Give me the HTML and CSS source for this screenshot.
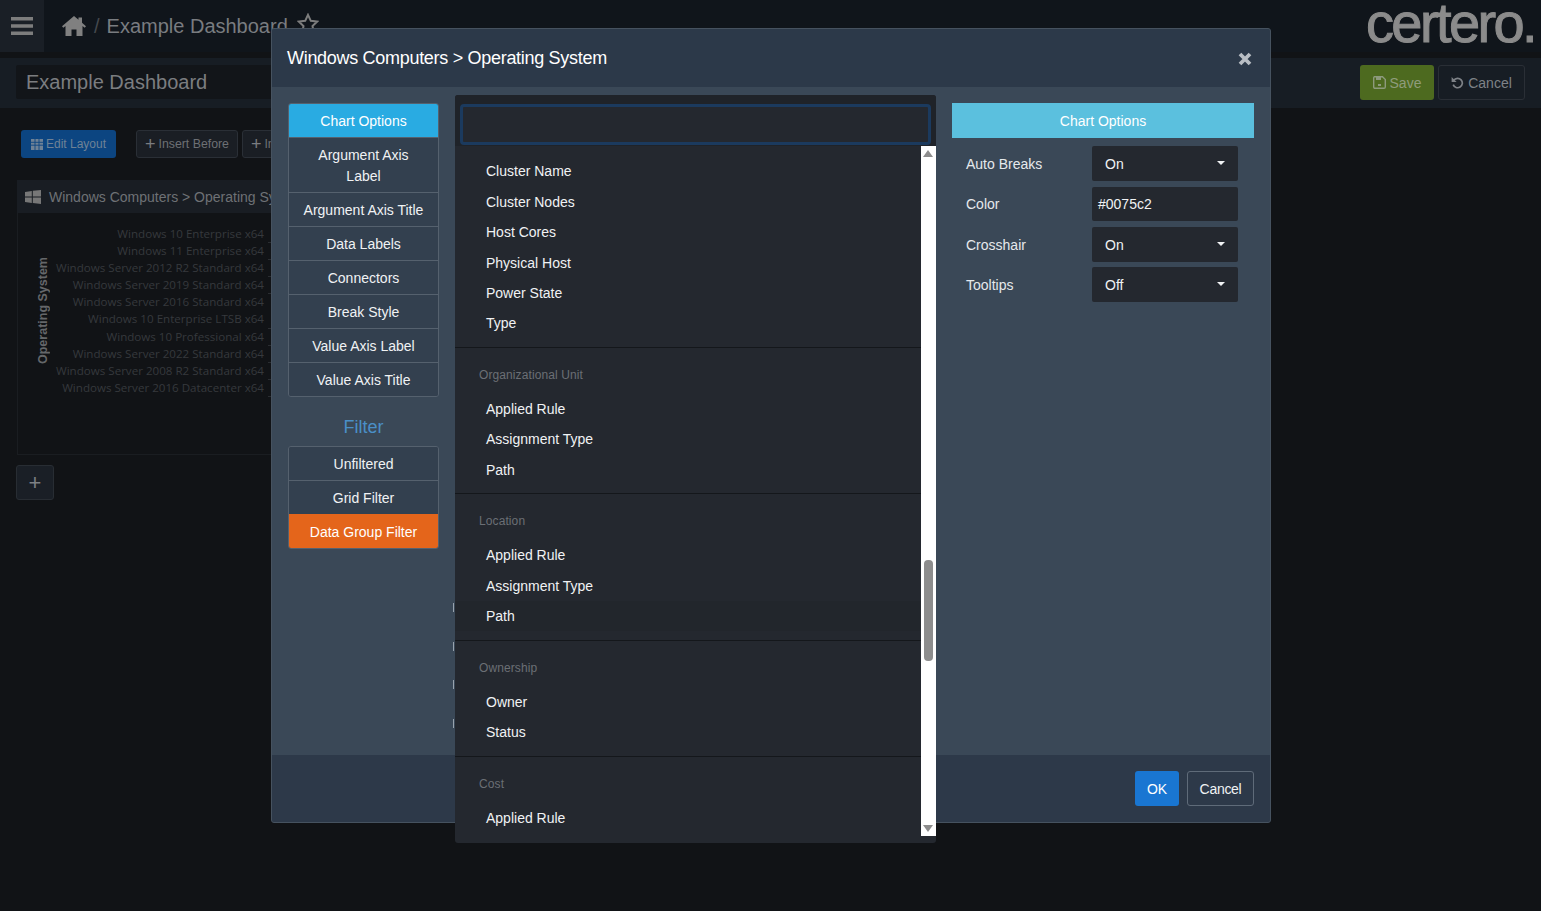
FILE: index.html
```html
<!DOCTYPE html>
<html lang="en">
<head>
<meta charset="utf-8">
<title>Example Dashboard</title>
<link rel="stylesheet" href="styles.css">
</head>
<body>
<div class="page">
  <header class="topbar">
    <button class="menu-btn" aria-label="Menu">
      <svg width="22" height="18" viewBox="0 0 22 18"><path d="M0 0h22v3.4H0zM0 7.3h22v3.4H0zM0 14.6h22V18H0z" fill="#7d7d7d"/></svg>
    </button>
    <div class="crumbs">
      <svg class="home" width="24" height="20" viewBox="0 0 24 20"><path d="M12 0 0 10.2l1.3 1.5L3.5 10v10h6v-6.5h5V20h6V10l2.2 1.7 1.3-1.5L20 6.8V1.5h-3.5v2.3z" fill="#808080"/></svg>
      <span class="sep">/</span>
      <span class="crumb-title">Example Dashboard</span>
      <svg class="star" width="22" height="21" viewBox="0 0 22 21"><path d="m11 1.8 2.8 6 6.4.8-4.7 4.4 1.2 6.4L11 16.2l-5.700 3.200 1.200-6.400L1.800 8.600l6.400-.8z" fill="none" stroke="#7d7d7d" stroke-width="2"/></svg>
    </div>
    <div class="logo">certero.</div>
  </header>

  <div class="subbar">
    <div class="name-input">Example Dashboard</div>
    <div class="sub-actions">
      <button class="btn-save">
        <svg width="13" height="13" viewBox="0 0 13 13"><path d="M1.500.7h8l2.800 2.800v7.500a1.300 1.300 0 0 1-1.300 1.300H1.500A1.300 1.300 0 0 1 .7 11V2a1.300 1.300 0 0 1 .8-1.300z" fill="none" stroke="#8d9a7c" stroke-width="1.400"/><path d="M3 1h5v3H3zM5 8h3v2H5z" fill="#8d9a7c"/></svg>
        Save
      </button>
      <button class="btn-cancel-top">
        <svg width="13" height="13" viewBox="0 0 13 13"><path d="M2.800 4.300a4.700 4.700 0 1 1-.6 4.300" fill="none" stroke="#7e8287" stroke-width="1.700"/><path d="M.6 1v5h5z" fill="#7e8287"/></svg>
        Cancel
      </button>
    </div>
  </div>

  <main class="content">
    <div class="toolbar">
      <button class="btn-layout">
        <svg width="12" height="11" viewBox="0 0 12 11"><path d="M0 0h12v11H0z" fill="#6f8296"/><path d="M0 3.300h12M0 6.200h12M4 0v11M8 0v11" stroke="#0c4581" stroke-width=".9"/></svg>
        Edit Layout
      </button>
      <button class="btn-tool"><span class="plus">+</span>Insert Before</button>
      <button class="btn-tool"><span class="plus">+</span>Insert After</button>
    </div>
    <section class="widget">
      <div class="widget-head">
        <svg width="16" height="14" viewBox="0 0 16 14"><path d="M0 2 6.800.9v5.500H0zM7.800.8 16 0v6.400H7.800zM0 7.400h6.800v5.500L0 12zM7.800 7.400H16V14l-8.200-1.100z" fill="#777"/></svg>
        <span>Windows Computers &gt; Operating System</span>
      </div>
      <div class="widget-body">
        <div class="axis-title">Operating System</div>
        <ul class="axis-labels">
          <li>Windows 10 Enterprise x64</li>
          <li>Windows 11 Enterprise x64</li>
          <li>Windows Server 2012 R2 Standard x64</li>
          <li>Windows Server 2019 Standard x64</li>
          <li>Windows Server 2016 Standard x64</li>
          <li>Windows 10 Enterprise LTSB x64</li>
          <li>Windows 10 Professional x64</li>
          <li>Windows Server 2022 Standard x64</li>
          <li>Windows Server 2008 R2 Standard x64</li>
          <li>Windows Server 2016 Datacenter x64</li>
        </ul>
        <div class="axis-ticks"></div>
      </div>
    </section>
    <button class="btn-add">+</button>
  </main>

  <div class="modal">
    <div class="modal-head">
      <h2>Windows Computers &gt; Operating System</h2>
      <svg class="close" width="14" height="14" viewBox="0 0 14 14"><path d="M2 2l10 10M12 2 2 12" stroke="#b9bec4" stroke-width="3.800"/></svg>
    </div>
    <div class="modal-body">
      <nav class="side">
        <div class="list">
          <div class="list-item active">Chart Options</div>
          <div class="list-item">Argument Axis Label</div>
          <div class="list-item wide">Argument Axis Title</div>
          <div class="list-item">Data Labels</div>
          <div class="list-item">Connectors</div>
          <div class="list-item">Break Style</div>
          <div class="list-item wide">Value Axis Label</div>
          <div class="list-item">Value Axis Title</div>
        </div>
        <div class="filter-title">Filter</div>
        <div class="list">
          <div class="list-item">Unfiltered</div>
          <div class="list-item">Grid Filter</div>
          <div class="list-item orange">Data Group Filter</div>
        </div>
      </nav>
      <div class="middle">
        <span class="peek"></span>
        <span class="peek"></span>
        <span class="peek"></span>
        <span class="peek"></span>
      </div>
      <aside class="options">
        <div class="options-title">Chart Options</div>
        <div class="opt-row"><label>Auto Breaks</label><div class="select">On</div></div>
        <div class="opt-row"><label>Color</label><div class="text-input">#0075c2</div></div>
        <div class="opt-row"><label>Crosshair</label><div class="select">On</div></div>
        <div class="opt-row"><label>Tooltips</label><div class="select">Off</div></div>
      </aside>
    </div>
    <div class="modal-foot">
      <button class="btn-ok">OK</button>
      <button class="btn-cancel">Cancel</button>
    </div>
  </div>

  <div class="dropdown">
    <div class="search-wrap"><div class="search"></div></div>
    <div class="drop-main">
      <div class="drop-list">
        <div class="group first">
          <div class="opt">Cluster Name</div>
          <div class="opt">Cluster Nodes</div>
          <div class="opt">Host Cores</div>
          <div class="opt">Physical Host</div>
          <div class="opt">Power State</div>
          <div class="opt">Type</div>
        </div>
        <div class="group">
          <div class="group-title">Organizational Unit</div>
          <div class="opt">Applied Rule</div>
          <div class="opt">Assignment Type</div>
          <div class="opt">Path</div>
        </div>
        <div class="group">
          <div class="group-title">Location</div>
          <div class="opt">Applied Rule</div>
          <div class="opt">Assignment Type</div>
          <div class="opt hover">Path</div>
        </div>
        <div class="group">
          <div class="group-title">Ownership</div>
          <div class="opt">Owner</div>
          <div class="opt">Status</div>
        </div>
        <div class="group">
          <div class="group-title">Cost</div>
          <div class="opt">Applied Rule</div>
        </div>
      </div>
      <div class="scrollbar">
        <span class="arrow up"></span>
        <div class="track"><div class="thumb"></div></div>
        <span class="arrow down"></span>
      </div>
    </div>
  </div>
</div>
</body>
</html>
```

FILE: styles.css
```css
* { box-sizing: border-box; }
html, body { margin: 0; height: 100%; }
body { background: #111316; font-family: "Liberation Sans", Arial, sans-serif; overflow: hidden; }
button { font-family: inherit; cursor: pointer; }
ul { list-style: none; margin: 0; padding: 0; }

.page { position: relative; width: 1541px; height: 911px; overflow: hidden; }

.topbar { height: 52px; background: #10151b; display: flex; align-items: center; }
.menu-btn { width: 44px; height: 52px; background: #1a1f26; border: 0; padding: 0; display: flex; align-items: center; justify-content: center; }
.crumbs { display: flex; align-items: center; margin-left: 18px; }
.sep { color: #44484d; font-size: 20px; margin: 0 7px 0 8px; }
.crumb-title { color: #797c80; font-size: 20px; }
.star { margin-left: 9px; margin-top: -5px; }
.logo { margin-left: auto; margin-right: 6px; align-self: flex-start; color: #8b8b8b; font-size: 56px; font-weight: 400; letter-spacing: -2.600px; line-height: 46px; -webkit-text-stroke: 1px #8b8b8b; }

.subbar { height: 50px; margin-top: 6px; background: #171d24; display: flex; align-items: flex-start; justify-content: space-between; padding: 7px 16px 0; }
.name-input { width: 560px; height: 34px; background: #121519; color: #7b7d80; font-size: 20px; line-height: 34px; padding-left: 10px; border-radius: 2px; }
.sub-actions { display: flex; gap: 4px; }
.btn-save { width: 74px; height: 35px; background: #4d6a1f; border: 0; border-radius: 3px; color: #8f9c7b; font-size: 14px; display: flex; align-items: center; justify-content: center; gap: 4px; }
.btn-cancel-top { width: 87px; height: 35px; background: transparent; border: 1px solid #2a2f36; border-radius: 3px; color: #7e8287; font-size: 14px; display: flex; align-items: center; justify-content: center; gap: 4px; }

.content { padding: 22px 16px 0; }
.toolbar { display: flex; margin-left: 5px; }
.btn-layout { width: 95px; height: 28px; background: #0c4581; border: 0; border-radius: 3px; color: #6f8296; font-size: 12px; display: flex; align-items: center; justify-content: center; gap: 3px; padding: 0; margin-right: 20px; }
.btn-tool { height: 28px; background: #1a1e24; border: 1px solid #2a2f36; border-radius: 3px; color: #6d7074; font-size: 12.300px; display: flex; align-items: center; padding: 0 8px; margin-right: 4px; white-space: nowrap; }
.plus { font-size: 18px; line-height: 18px; margin-right: 3px; color: #7a7c80; }

.widget { margin-top: 22px; width: 560px; margin-left: 1px; }
.widget-head { height: 33px; background: #191d23; display: flex; align-items: center; gap: 8px; padding-left: 8px; color: #6e7175; font-size: 14px; }
.widget-body { height: 242px; border: 1px solid #1a1d21; border-top: 0; display: flex; padding: 12px 0 0 0; }
.axis-title { flex: none; writing-mode: vertical-rl; transform: rotate(180deg); color: #65676a; font-size: 12.500px; font-weight: 700; height: 108px; width: 14px; margin: 32px 0 0 18px; text-align: center; white-space: nowrap; }
.axis-labels { flex: none; width: 214px; text-align: right; font-family: "Open Sans", sans-serif; font-size: 11.600px; line-height: 17.100px; color: #36393d; }
.axis-labels li { white-space: nowrap; }
.axis-ticks { flex: none; width: 4px; height: 171px; margin: 1px 0 0 4px; background: repeating-linear-gradient(to bottom, transparent 0, transparent 16.100px, #2a2d31 16.100px, #2a2d31 17.100px); }

.btn-add { display: block; margin-top: 10px; width: 38px; height: 35px; background: #1a1f26; border: 1px solid #282d33; border-radius: 3px; color: #7d8084; font-size: 22px; line-height: 30px; padding: 0; }

/* Modal overlays the page */
.modal { position: absolute; left: 271px; top: 28px; width: 1000px; height: 795px; border: 1px solid #46525f; border-radius: 3px; background: #3a4857; display: flex; flex-direction: column; overflow: hidden; }
.modal-head { height: 58px; flex: none; background: #2c3949; display: flex; align-items: center; justify-content: space-between; padding: 1px 18px 0 15px; }
.modal-head h2 { margin: 0; color: #fff; font-size: 18px; font-weight: 400; letter-spacing: -.3px; }
.modal-body { flex: 1; display: flex; padding: 16px 16px 0; min-height: 0; }
.modal-foot { height: 67px; flex: none; background: #2d3949; display: flex; align-items: center; justify-content: flex-end; gap: 8px; padding: 0 16px; }

.side { width: 151px; flex: none; }
.list { border: 1px solid #55616e; border-radius: 3px; overflow: hidden; }
.list-item { color: #f0f2f4; font-size: 14px; text-align: center; line-height: 21px; padding: 7px 24px 5px; background: #33404f; border-top: 1px solid #55616e; }
.list > .list-item:first-child { border-top: 0; }
.list-item.wide { padding-left: 6px; padding-right: 6px; }
.list-item.active { background: #29abe2; color: #fff; margin: -1px -1px 0; height: 34px; padding-top: 8px; padding-bottom: 5px; }
.list-item.orange { background: #e4651b; color: #fff; margin: 0 -1px -1px; height: 35px; padding: 8px 6px 6px; border-top: 0; }
.filter-title { color: #4a8fc7; font-size: 18px; text-align: center; line-height: 22px; margin: 19px 0 8px; }

.middle { flex: 1; display: flex; flex-direction: column; gap: 29.500px; padding: 500px 0 0 14px; }
.peek { width: 1px; height: 9px; background: #98a3ae; }

.options { width: 302px; flex: none; }
.options-title { height: 35px; background: #5bc0de; color: #fff; font-size: 14px; text-align: center; line-height: 36px; }
.opt-row { display: flex; align-items: center; justify-content: space-between; padding: 0 16px 0 14px; margin-top: 6px; }
.opt-row:nth-child(2) { margin-top: 8px; }
.opt-row:nth-child(5) { margin-top: 5px; }
.opt-row label { color: #e6e9ec; font-size: 14px; }
.select, .text-input { position: relative; width: 146px; height: 35px; background: #24282f; border-radius: 2px; color: #f0f2f4; font-size: 14px; line-height: 36px; padding-left: 13px; }
.text-input { height: 34px; line-height: 35px; padding-left: 6px; }
.select::after { content: ""; position: absolute; right: 13px; top: 15px; border: 4px solid transparent; border-top-color: #f0f2f4; border-bottom: 0; }

.btn-ok { width: 44px; height: 35px; background: #1976d2; border: 0; border-radius: 3px; color: #fff; font-size: 14px; padding: 0; }
.btn-cancel { width: 67px; height: 35px; background: transparent; border: 1px solid #5f6b79; border-radius: 3px; color: #f0f2f4; font-size: 14px; letter-spacing: -.3px; padding: 0; }

/* Dropdown lies over the modal */
.dropdown { position: absolute; left: 455px; top: 95px; width: 481px; height: 748px; background: #24282f; border-radius: 3px; display: flex; flex-direction: column; overflow: hidden; }
.search-wrap { height: 51px; flex: none; padding: 9px 5px 0 5px; background: #1f2329; }
.search { height: 41px; background: #24282f; border: 3px solid #1b3a5e; border-radius: 4px; }
.drop-main { flex: 1; display: flex; min-height: 0; padding-bottom: 7px; }
.drop-list { flex: 1; overflow: hidden; }
.group { border-bottom: 1px solid #14171b; padding-bottom: 8.200px; }
.group.first { padding-top: 10.400px; }
.group:last-child { border-bottom: 0; }
.group-title { color: #6b6f75; font-size: 12px; letter-spacing: .1px; line-height: 18px; padding: 18px 0 10px 24px; }
.opt { color: #f0f2f4; font-size: 14px; height: 30.400px; line-height: 30.400px; padding-left: 31px; }
.opt.hover { background: #22262c; }
.scrollbar { width: 15px; flex: none; background: #fff; display: flex; flex-direction: column; align-items: center; padding: 4px 0; }
.track { flex: 1; width: 9px; padding-top: 403px; }
.thumb { height: 101px; background: #8d8d8d; border-radius: 4px; }
.arrow { flex: none; width: 0; height: 0; margin-right: 1px; border-left: 5px solid transparent; border-right: 5px solid transparent; }
.arrow.up { border-bottom: 7px solid #8d8d8d; }
.arrow.down { border-top: 7px solid #8d8d8d; }
```
